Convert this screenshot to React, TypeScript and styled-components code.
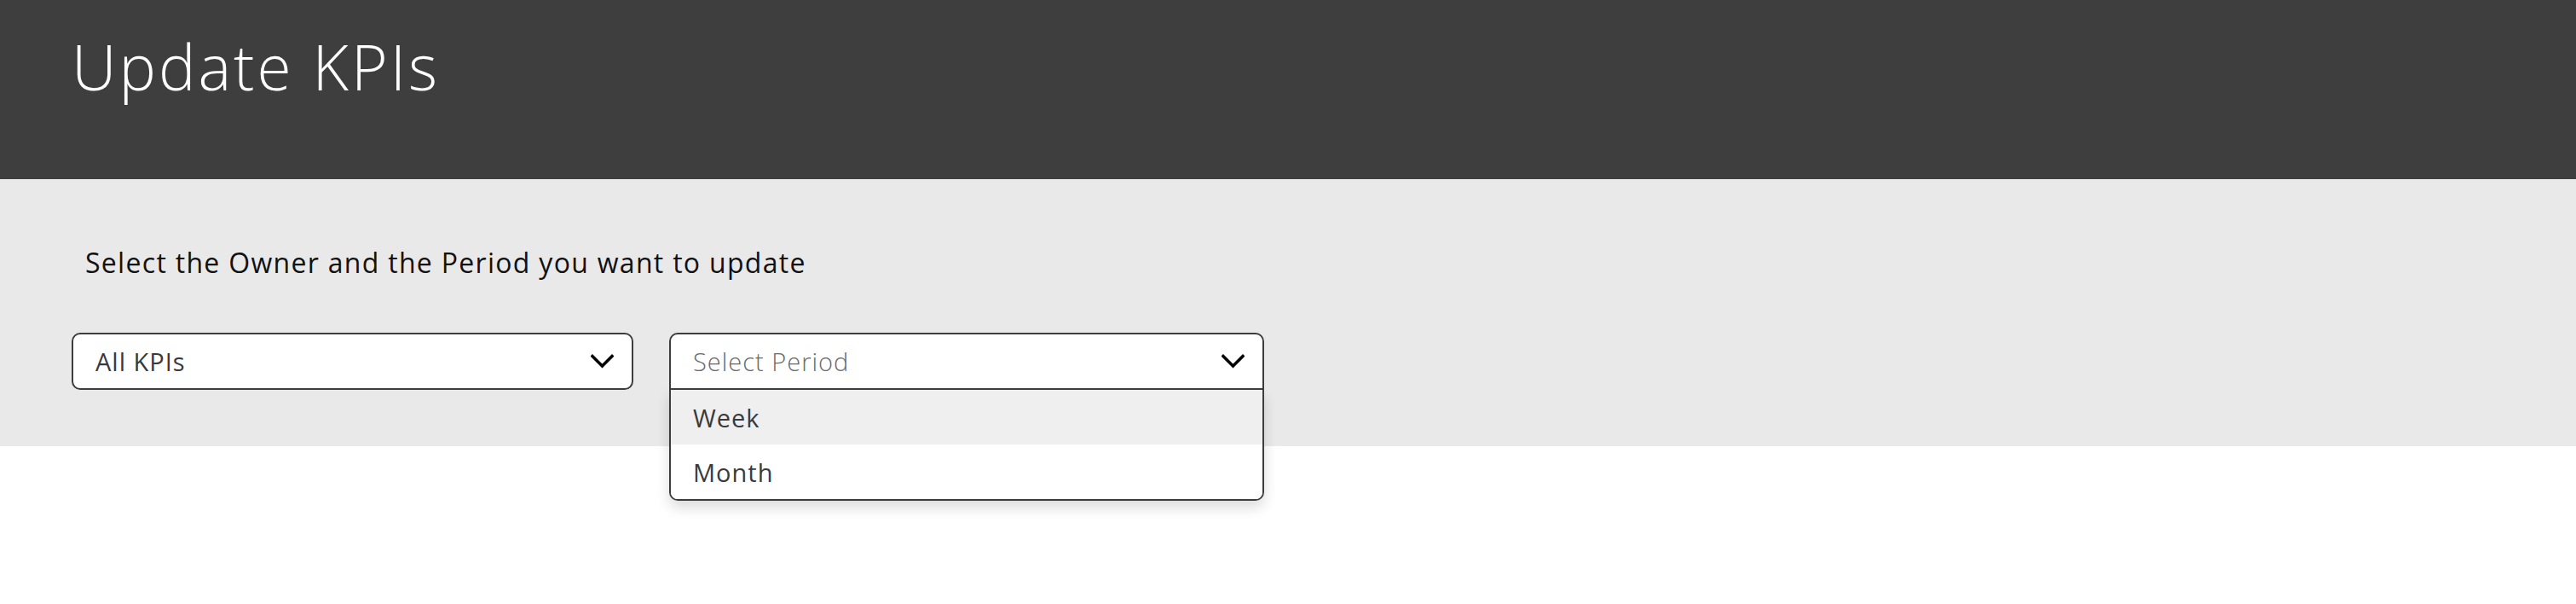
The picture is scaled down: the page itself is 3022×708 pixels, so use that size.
import * as React from 'react';
import styled, { createGlobalStyle } from 'styled-components';

const GlobalStyle = createGlobalStyle`
    html, body {
        margin: 0;
        padding: 0;
        background: #ffffff;
        font-family: 'Open Sans', 'Liberation Sans', sans-serif;
    }
`;

interface Option {
    value: string;
    label: string;
}

const periodOptions: Option[] = [
    { value: 'week', label: 'Week' },
    { value: 'month', label: 'Month' },
];

const Chevron: React.FC = () => (
    <svg width='27' height='17' viewBox='0 0 27 17' fill='none'>
        <path d='M2 2.5 L13.5 14 L25 2.5' stroke='#000' strokeWidth='3.4' strokeLinecap='square' />
    </svg>
);

interface SelectProps {
    width: number;
    value?: string;
    placeholder?: string;
    options?: Option[];
    open?: boolean;
    hovered?: string;
}

const Select: React.FC<SelectProps> = (props) => {
    return (
        <SelectBox width={props.width}>
            <Trigger open={props.open}>
                {props.value ? <Value>{props.value}</Value> : <Placeholder>{props.placeholder}</Placeholder>}
                <Chevron />
            </Trigger>
            {props.open && (
                <Menu>
                    {props.options?.map((opt) => (
                        <MenuItem key={opt.value} active={opt.value === props.hovered}>
                            {opt.label}
                        </MenuItem>
                    ))}
                </Menu>
            )}
        </SelectBox>
    );
};

const App: React.FC = () => {
    return (
        <Page>
            <GlobalStyle />
            <Header>
                <Title>Update KPIs</Title>
            </Header>
            <Panel>
                <Prompt>Select the Owner and the Period you want to update</Prompt>
                <Row>
                    <Select width={659} value='All KPIs' />
                    <Select width={698} placeholder='Select Period' options={periodOptions} open={true} hovered='week' />
                </Row>
            </Panel>
            <Content />
        </Page>
    );
};

const Page = styled.div`
    min-height: 708px;
    display: flex;
    flex-direction: column;
`;

const Header = styled.header`
    box-sizing: border-box;
    height: 210px;
    background: #3e3e3e;
    padding: 28px 84px 0;
`;

const Title = styled.h1`
    margin: 0;
    font-weight: 300;
    font-size: 73px;
    line-height: 100px;
    letter-spacing: 3px;
    color: #ffffff;
`;

const Panel = styled.section`
    position: relative;
    z-index: 1;
    box-sizing: border-box;
    height: 313px;
    background: #e9e9e9;
    padding: 76px 84px 0;
`;

const Content = styled.main`
    flex: 1;
    background: #ffffff;
`;

const Prompt = styled.p`
    margin: 0 0 60px;
    padding-left: 16px;
    font-size: 32px;
    line-height: 44px;
    letter-spacing: 1.3px;
    color: #111111;
`;

const Row = styled.div`
    display: flex;
    align-items: flex-start;
    gap: 42px;
`;

const SelectBox = styled.div<{ width: number }>`
    position: relative;
    width: ${(p) => p.width}px;
`;

const Trigger = styled.div<{ open?: boolean }>`
    box-sizing: border-box;
    height: 67px;
    display: flex;
    align-items: center;
    justify-content: space-between;
    padding: 0 21px 0 26px;
    background: #ffffff;
    border: 2px solid #3d3d3d;
    border-radius: ${(p) => (p.open ? '10px 10px 0 0' : '10px')};
    font-size: 29px;
    letter-spacing: 1px;
`;

const Value = styled.span`
    font-weight: 500;
    color: #3a3a3a;
`;

const Placeholder = styled.span`
    font-weight: 300;
    color: #6a6a6a;
`;

const Menu = styled.div`
    position: absolute;
    top: 100%;
    left: 0;
    right: 0;
    z-index: 10;
    background: #ffffff;
    border: 2px solid #3d3d3d;
    border-top: none;
    border-radius: 0 0 10px 10px;
    box-shadow: 0 8px 16px rgba(0, 0, 0, 0.14);
    overflow: hidden;
`;

const MenuItem = styled.div<{ active?: boolean }>`
    height: 64px;
    display: flex;
    align-items: center;
    padding-left: 26px;
    font-size: 29px;
    font-weight: 500;
    letter-spacing: 1px;
    color: #3a3a3a;
    background: ${(p) => (p.active ? '#efefef' : '#ffffff')};
`;

export default App;
